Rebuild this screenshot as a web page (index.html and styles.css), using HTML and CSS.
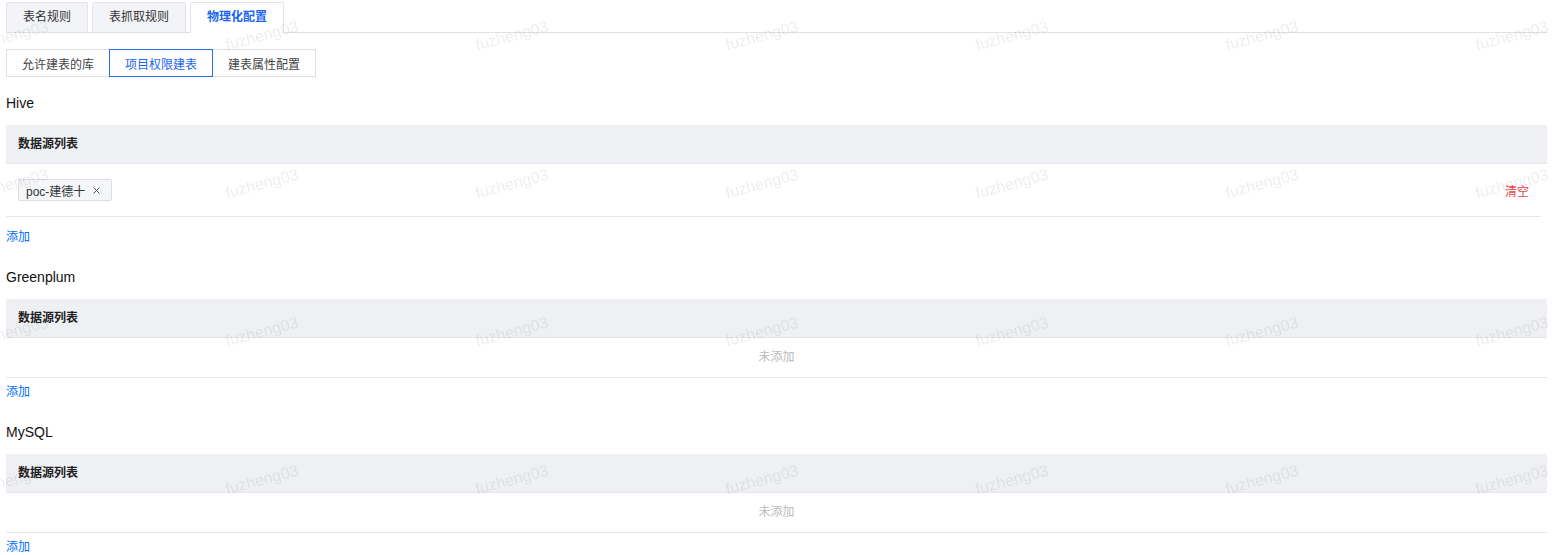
FILE: index.html
```html
<!DOCTYPE html>
<html lang="zh-CN">
<head>
    <meta charset="UTF-8">
    <meta name="viewport" content="width=device-width, initial-scale=1.0">
    <title>物理化配置</title>
    <link rel="stylesheet" href="styles.css">
</head>
<body>
    <div class="page">
        <div class="tabs">
            <div class="tab">表名规则</div>
            <div class="tab">表抓取规则</div>
            <div class="tab active">物理化配置</div>
        </div>

        <div class="seg">
            <button class="seg-btn">允许建表的库</button>
            <button class="seg-btn active">项目权限建表</button>
            <button class="seg-btn">建表属性配置</button>
        </div>

        <section class="db">
            <h3 class="db-title">Hive</h3>
            <div class="ds-table filled">
                <div class="ds-head">数据源列表</div>
                <div class="ds-row">
                    <span class="tag">poc-建德十
                        <svg class="tag-close" width="7" height="7" viewBox="0 0 7 7"><path d="M0.5 0.5L6.5 6.5M6.5 0.5L0.5 6.5" stroke="#555" stroke-width="1" fill="none"/></svg>
                    </span>
                    <a class="clear">清空</a>
                </div>
            </div>
            <a class="add">添加</a>
        </section>

        <section class="db">
            <h3 class="db-title">Greenplum</h3>
            <div class="ds-table">
                <div class="ds-head">数据源列表</div>
                <div class="ds-empty">未添加</div>
            </div>
            <a class="add">添加</a>
        </section>

        <section class="db">
            <h3 class="db-title">MySQL</h3>
            <div class="ds-table">
                <div class="ds-head">数据源列表</div>
                <div class="ds-empty">未添加</div>
            </div>
            <a class="add">添加</a>
        </section>
    </div>

    <!-- watermark overlay -->
    <div class="watermark">
        <div class="wm-grid">
            <span>fuzheng03</span><span>fuzheng03</span><span>fuzheng03</span><span>fuzheng03</span><span>fuzheng03</span><span>fuzheng03</span><span>fuzheng03</span>
            <span>fuzheng03</span><span>fuzheng03</span><span>fuzheng03</span><span>fuzheng03</span><span>fuzheng03</span><span>fuzheng03</span><span>fuzheng03</span>
            <span>fuzheng03</span><span>fuzheng03</span><span>fuzheng03</span><span>fuzheng03</span><span>fuzheng03</span><span>fuzheng03</span><span>fuzheng03</span>
            <span>fuzheng03</span><span>fuzheng03</span><span>fuzheng03</span><span>fuzheng03</span><span>fuzheng03</span><span>fuzheng03</span><span>fuzheng03</span>
        </div>
    </div>
</body>
</html>
```

FILE: styles.css
```css
body {
    margin: 0;
    font-family: "Liberation Sans", "Noto Sans CJK SC", sans-serif;
    font-size: 12px;
    color: #222;
    background: #fff;
}
.page {
    padding: 2px 6px 0;
}

/* top tabs */
.tabs {
    display: flex;
    align-items: flex-end;
    gap: 4px;
    border-bottom: 1px solid #dfe1ea;
}
.tab {
    box-sizing: border-box;
    height: 30px;
    line-height: 29px;
    padding: 0 16px;
    background: #f3f4f7;
    border: 1px solid #e3e5eb;
    border-bottom: none;
    border-radius: 2px 2px 0 0;
    color: #333;
}
.tab.active {
    height: 31px;
    margin-bottom: -1px;
    background: #fff;
    color: #1b64f0;
    font-weight: 600;
}

/* segmented buttons */
.seg {
    display: flex;
    margin: 16px 0 16px;
}
.seg-btn {
    position: relative;
    box-sizing: border-box;
    height: 28px;
    padding: 0 15px;
    margin-left: -1px;
    font-family: inherit;
    font-size: 12px;
    color: #444;
    background: #fff;
    border: 1px solid #dcdfe6;
    cursor: pointer;
}
.seg-btn:first-child {
    margin-left: 0;
}
.seg-btn.active {
    z-index: 1;
    color: #1b64f0;
    border-color: #2a6ef0;
}

/* data source sections */
.db + .db {
    margin-top: 20px;
}
.db-title {
    margin: 0 0 12px;
    font-size: 14px;
    line-height: 20px;
    font-weight: normal;
    color: #111;
}
.ds-head {
    height: 38px;
    line-height: 38px;
    padding: 0 12px;
    background: #eff0f4;
    border-bottom: 1px solid #e3e5eb;
    font-weight: 600;
    color: #222;
}
.ds-table.filled {
    margin-bottom: 10px;
}
.ds-row {
    display: flex;
    align-items: center;
    justify-content: space-between;
    height: 52px;
    padding: 0 12px;
    margin-right: 6px;
    border-bottom: 1px solid #e6e7ec;
}
.ds-empty {
    height: 39px;
    line-height: 39px;
    text-align: center;
    color: #bbb;
    border-bottom: 1px solid #e6e7ec;
}
.tag {
    box-sizing: border-box;
    display: inline-flex;
    align-items: center;
    gap: 8px;
    height: 22px;
    padding: 0 11px 0 7px;
    background: #f5f6f8;
    border: 1px solid #dcdde3;
    border-radius: 2px;
    color: #333;
}
.clear {
    color: #e54545;
    cursor: pointer;
}
.add {
    display: block;
    margin-top: 4px;
    line-height: 20px;
    color: #006eff;
    cursor: pointer;
}

/* watermark */
.watermark {
    position: fixed;
    top: 0;
    left: 0;
    right: 0;
    bottom: 0;
    overflow: hidden;
    pointer-events: none;
}
.wm-grid {
    display: grid;
    grid-template-columns: repeat(7, 250px);
    grid-auto-rows: 148px;
    margin: -38px 0 0 -113px;
}
.wm-grid span {
    display: flex;
    align-items: center;
    justify-content: center;
    font-family: "Liberation Sans", sans-serif;
    font-size: 16px;
    color: rgba(0, 0, 0, 0.07);
    transform: rotate(-15deg);
}
```
